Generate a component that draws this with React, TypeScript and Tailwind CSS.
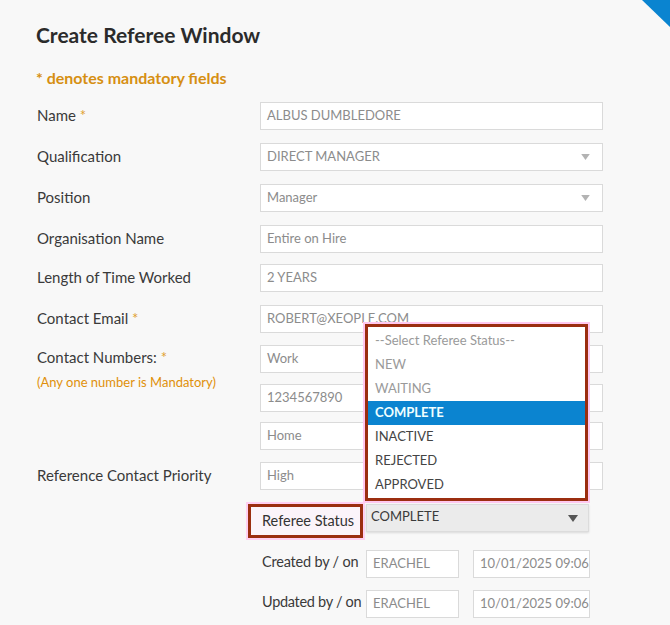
import React from "react";

const Arrow = ({ dark }: { dark?: boolean }) => (
  <svg width={dark ? 10 : 9} height={dark ? 7 : 6} viewBox="0 0 10 7" className="shrink-0">
    <polygon points="0,0 10,0 5,7" fill={dark ? "#555" : "#b3b3b3"} />
  </svg>
);

const Input = ({ value, select, w = "w-[343px]", mt = "" }: { value: string; select?: boolean; w?: string; mt?: string }) => (
  <div
    className={`${w} ${mt} h-[28px] shrink-0 border border-[#dadada] bg-white pl-[6px] pr-[12px] flex items-center justify-between text-[13px] text-[#8c8c8c] overflow-hidden whitespace-nowrap`}
  >
    <span>{value}</span>
    {select && <Arrow />}
  </div>
);

const Row = ({ label, value, select, star, mt }: { label: string; value: string; select?: boolean; star?: boolean; mt: string }) => (
  <div className={`flex items-center ${mt}`}>
    <div className="w-[224px] pl-[1px] text-[15px] leading-[22px] text-[#3a3a3a] -mt-[2px]">
      {label}
      {star && <span className="text-[#e0a030]"> *</span>}
    </div>
    <Input value={value} select={select} />
  </div>
);

const options = [
  { t: "--Select Referee Status--", c: "text-[#9a9a9a]" },
  { t: "NEW", c: "text-[#9a9a9a]" },
  { t: "WAITING", c: "text-[#9a9a9a]" },
  { t: "COMPLETE", c: "bg-[#0b84d0] text-[#f0ffff] font-bold" },
  { t: "INACTIVE", c: "text-[#444]" },
  { t: "REJECTED", c: "text-[#444]" },
  { t: "APPROVED", c: "text-[#444]" },
];

export default function App() {
  return (
    <div className="relative w-[670px] h-[625px] bg-[#f8f8f8] overflow-hidden font-['Lato',sans-serif]">
      <svg className="absolute top-0 right-0" width="28" height="27" viewBox="0 0 28 27">
        <polygon points="0,0 28,0 28,27" fill="#0a84d0" />
      </svg>
      <div className="pl-[36px] pt-[21px]">
        <h1 className="text-[21px] font-bold leading-[28px] text-[#2b2b2b]">Create Referee Window</h1>
        <p className="mt-[19px] text-[16px] font-bold leading-[20px] text-[#d68f12]">* denotes mandatory fields</p>

        <Row mt="mt-[14px]" label="Name" star value="ALBUS DUMBLEDORE" />
        <Row mt="mt-[13px]" label="Qualification" value="DIRECT MANAGER" select />
        <Row mt="mt-[13px]" label="Position" value="Manager" select />
        <Row mt="mt-[13px]" label="Organisation Name" value="Entire on Hire" />
        <Row mt="mt-[11px]" label="Length of Time Worked" value="2 YEARS" />
        <Row mt="mt-[13px]" label="Contact Email" star value="ROBERT@XEOPLE.COM" />

        <div className="flex mt-[12px]">
          <div className="w-[224px] pl-[1px]">
            <div className="text-[15px] leading-[22px] text-[#3a3a3a] mt-[1px]">
              Contact Numbers:<span className="text-[#e0a030]"> *</span>
            </div>
            <div className="mt-[5px] text-[13px] leading-[18px] text-[#e0900a]">(Any one number is Mandatory)</div>
          </div>
          <div className="flex flex-col">
            <Input value="Work" />
            <Input value="1234567890" mt="mt-[11px]" />
            <Input value="Home" mt="mt-[10px]" />
          </div>
        </div>

        <Row mt="mt-[12px]" label="Reference Contact Priority" value="High" />

        <div className="ml-[224px] mt-[14px]">
          <div className="flex items-start">
            <div className="-ml-[12px] w-[115px] h-[34px] border-[3px] border-[#9b2e10] shadow-[0_0_0_2px_#ffd0f2] bg-[#fbf4fa] flex items-center pl-[11px] text-[14.5px] text-[#333] whitespace-nowrap">
              Referee Status
            </div>
            <div className="relative ml-[3px]">
              <div className="w-[223px] h-[28px] border border-[#dcdcdc] bg-[#ebebeb] pl-[4px] pr-[10px] flex items-center justify-between text-[13px] text-[#3a3a3a] shadow-[0_1px_2px_rgba(0,0,0,0.12)]">
                <span className="-mt-[3px]">COMPLETE</span>
                <Arrow dark />
              </div>
              <div className="absolute -left-[1px] bottom-[31px] w-[223px] h-[177px] border-[3px] border-[#9b2e10] bg-white shadow-[0_0_0_2px_#ffc8ef] pt-[2px]">
                {options.map((o) => (
                  <div key={o.t} className={`h-[24px] flex items-center pl-[7px] text-[13px] ${o.c}`}>
                    {o.t}
                  </div>
                ))}
              </div>
            </div>
          </div>

          <div className="flex items-center mt-[12px]">
            <div className="w-[106px] pl-[2px] text-[14.5px] text-[#3a3a3a] -mt-[5px] whitespace-nowrap tracking-[-0.2px]">Created by / on</div>
            <Input value="ERACHEL" w="w-[93px]" />
            <div className="ml-[14px]"><Input value="10/01/2025 09:06" w="w-[117px]" /></div>
          </div>
          <div className="flex items-center mt-[12px]">
            <div className="w-[106px] pl-[2px] text-[14.5px] text-[#3a3a3a] -mt-[5px] whitespace-nowrap tracking-[-0.3px]">Updated by / on</div>
            <Input value="ERACHEL" w="w-[93px]" />
            <div className="ml-[14px]"><Input value="10/01/2025 09:06" w="w-[117px]" /></div>
          </div>
        </div>
      </div>
    </div>
  );
}
